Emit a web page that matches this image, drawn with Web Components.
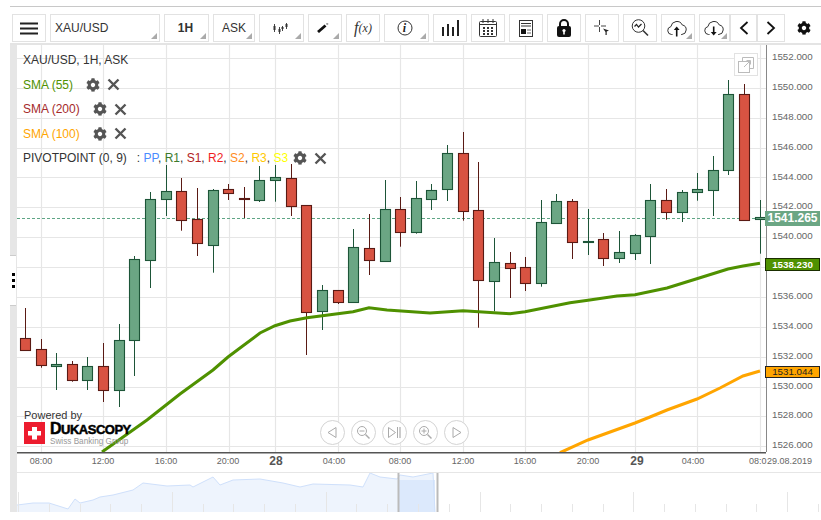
<!DOCTYPE html>
<html>
<head>
<meta charset="utf-8">
<title>XAU/USD</title>
<style>
  html, body { margin: 0; background: #fff; overflow: hidden; }
  body { font: 12px "Liberation Sans", Arial, sans-serif; color: #333; }
</style>
</head>
<body>
<trade-terminal>
  <tool-bar slot="toolbar">
    <tool-btn style="width:34px"><svg width="18" height="13" viewBox="0 0 18 13"><path d="M0 1.5h18M0 6.5h18M0 11.5h18" stroke="#222" stroke-width="2"/></svg></tool-btn>
    <tool-btn arrow style="width:110px;justify-content:flex-start;padding-left:4px">XAU/USD</tool-btn>
    <tool-btn arrow style="width:45px;font-weight:bold;padding-right:2px">1H</tool-btn>
    <tool-btn arrow style="width:42px">ASK</tool-btn>
    <tool-btn arrow style="width:45px"><svg width="15" height="11" viewBox="0 0 15 11" style="margin-right:3px"><path d="M1.5 1v8M6.500 4v7M9.500 3v5M13.500 0v6" stroke="#444"/><path d="M.5 3h2v4h-2zM5.500 6h2v3h-2zM8.500 4h2v2h-2zM12.500 1h2v3h-2z" fill="#333"/></svg></tool-btn>
    <tool-btn arrow style="width:34px"><svg width="12" height="10" viewBox="0 0 12 10" style="margin:-1px 4px 0 0"><path d="M1 9L8.5 2.5" stroke="#111" stroke-width="2.8"/><path d="M9.5 1.5L11 .3" stroke="#999" stroke-width="2"/></svg></tool-btn>
    <tool-btn style="width:34px;font:italic 14px 'Liberation Serif',serif;color:#333"><span style="font-size:16px">f</span><span style="font-size:12px">(x)</span></tool-btn>
    <tool-btn arrow style="width:45px"><svg width="16" height="16" viewBox="0 0 16 16" style="position:absolute;left:12px;top:5px"><circle cx="8" cy="8" r="7" fill="none" stroke="#333"/></svg><span style="font:italic bold 12px 'Liberation Serif',serif;color:#222;margin-left:-4px">i</span></tool-btn>
    <tool-btn style="width:34px"><svg width="17" height="16" viewBox="0 0 17 16"><path d="M1 7v9M6 4v12M11 7v9M16 0v16" stroke="#222" stroke-width="2"/></svg></tool-btn>
    <tool-btn style="width:34px"><svg width="18" height="18" viewBox="0 0 18 18"><rect x=".5" y="2.5" width="17" height="15" rx="1" fill="none" stroke="#333"/><path d="M4 0v4M9 0v4M14 0v4M.5 5.5h17" stroke="#333"/><path d="M4 8h2v2H4zM8 8h2v2H8zM12 8h2v2h-2zM4 11h2v2H4zM8 11h2v2H8zM12 11h2v2h-2zM4 14h2v2H4zM8 14h2v2H8zM12 14h2v2h-2z" fill="#333"/></svg></tool-btn>
    <tool-btn style="width:34px"><svg width="14" height="17" viewBox="0 0 14 17"><rect x=".5" y=".5" width="13" height="16" fill="none" stroke="#333"/><path d="M2 3.5h10M2 6h10" stroke="#333"/><rect x="2" y="9" width="5" height="5" fill="#111"/><path d="M8 10h4M8 13h4" stroke="#666"/></svg></tool-btn>
    <tool-btn style="width:34px"><svg width="14" height="18" viewBox="0 0 14 18"><path d="M3 8V5a4 4 0 0 1 8 0v3" fill="none" stroke="#111" stroke-width="2"/><rect y="7" width="14" height="11" rx="2" fill="#111"/><circle cx="7" cy="11.5" r="1.6" fill="#fff"/><rect x="6.2" y="12" width="1.6" height="3.5" fill="#fff"/></svg></tool-btn>
    <tool-btn style="width:34px"><svg width="16" height="16" viewBox="0 0 16 16"><path d="M5.5 0v5M5.5 7v5M0 6h5M7 6h5" stroke="#444"/><path d="M9 8.5l6 2-2.3 1v3.5h-1.2v-3z" fill="#222"/></svg></tool-btn>
    <tool-btn style="width:34px"><svg width="18" height="18" viewBox="0 0 18 18"><circle cx="7.5" cy="7" r="6.3" fill="none" stroke="#333"/><path d="M12 11.5l5 5" stroke="#333" stroke-width="1.6"/><path d="M3.5 7.5l2-2 2 2.5 3-3" fill="none" stroke="#222" stroke-width="1.2"/></svg></tool-btn>
    <tool-btn arrow style="width:34px"><svg width="20" height="17" viewBox="0 0 20 17" style="margin-right:3px"><path d="M5.5 14.5H4.5a4 4 0 0 1-.6-7.9A6 6 0 0 1 15.3 5a4.8 4.8 0 0 1-.5 9.5h-.8" fill="none" stroke="#333"/><path d="M9.7 16.5V9" stroke="#111" stroke-width="1.6"/><path d="M6.8 10l2.9-3.5 2.9 3.5z" fill="#111"/></svg></tool-btn>
    <tool-btn arrow style="width:31px;margin-right:-4px"><svg width="20" height="17" viewBox="0 0 20 17" style="margin-right:2px"><path d="M5.5 14.5H4.5a4 4 0 0 1-.6-7.9A6 6 0 0 1 15.3 5a4.8 4.8 0 0 1-.5 9.5h-.8" fill="none" stroke="#333"/><path d="M9.7 6.5V13" stroke="#111" stroke-width="1.6"/><path d="M6.8 12l2.9 3.5 2.9-3.5z" fill="#111"/></svg></tool-btn>
    <tool-btn style="width:27px;margin-right:-4px"><svg width="10" height="14" viewBox="0 0 10 14"><path d="M8.5 1L2 7l6.5 6" fill="none" stroke="#111" stroke-width="1.8"/></svg></tool-btn>
    <tool-btn style="width:28px"><svg width="10" height="14" viewBox="0 0 10 14"><path d="M1.5 1L8 7l-6.5 6" fill="none" stroke="#111" stroke-width="1.8"/></svg></tool-btn>
    <tool-btn plain style="width:16px;margin-left:7px"><svg width="16" height="16" viewBox="0 0 512 512"><path fill="#111" d="M487.4 315.7l-42.6-24.6c4.3-23.2 4.3-47 0-70.2l42.6-24.6c4.9-2.8 7.1-8.6 5.5-14-11.1-35.6-30-67.8-54.7-94.6-3.8-4.1-10-5.1-14.8-2.3L380.8 110c-17.9-15.4-38.5-27.3-60.8-35.1V25.8c0-5.6-3.9-10.5-9.4-11.7-36.7-8.2-74.3-7.8-109.2 0-5.5 1.2-9.4 6.1-9.4 11.7V75c-22.2 7.9-42.8 19.8-60.8 35.1L88.7 85.5c-4.9-2.8-11-1.9-14.8 2.3-24.7 26.7-43.6 58.9-54.7 94.6-1.7 5.4.6 11.2 5.5 14L67.3 221c-4.3 23.2-4.3 47 0 70.2l-42.6 24.6c-4.9 2.8-7.1 8.6-5.5 14 11.1 35.6 30 67.8 54.7 94.6 3.8 4.1 10 5.1 14.8 2.3l42.6-24.6c17.9 15.4 38.5 27.3 60.8 35.1v49.2c0 5.6 3.9 10.5 9.4 11.7 36.7 8.2 74.3 7.8 109.2 0 5.5-1.2 9.4-6.1 9.4-11.7v-49.2c22.2-7.9 42.8-19.8 60.8-35.1l42.6 24.6c4.9 2.8 11 1.9 14.8-2.3 24.7-26.7 43.6-58.9 54.7-94.6 1.5-5.5-.7-11.3-5.6-14.1zM256 336c-44.1 0-80-35.9-80-80s35.9-80 80-80 80 35.9 80 80-35.9 80-80 80z"/></svg></tool-btn>
  </tool-bar>

  <chart-plot slot="plot">
    <chart-legend>
      <div>XAU/USD, 1H, ASK</div>
      <legend-row style="color:#4f9100">SMA (55)</legend-row>
      <legend-row style="color:#a52a2a">SMA (200)</legend-row>
      <legend-row style="color:#ffa500">SMA (100)</legend-row>
      <legend-row>PIVOTPOINT (0, 9)<span style="margin-left:10px">:&nbsp;</span><span style="color:#4a8cff">PP</span>, <span style="color:#3c7a2c">R1</span>, <span style="color:#b22222">S1</span>, <span style="color:#f01e1e">R2</span>, <span style="color:#ff8c1e">S2</span>, <span style="color:#ffc800">R3</span>, <span style="color:#ffff00">S3</span></legend-row>
    </chart-legend>
    <pop-out></pop-out>
    <powered-by></powered-by>
    <nav-controls></nav-controls>
  </chart-plot>

  <price-axis slot="axis"></price-axis>
  <time-axis slot="time"></time-axis>
  <range-navigator slot="nav"></range-navigator>
</trade-terminal>

<script>
(function () {

    const terminalTemplate = document.createElement('template');
    terminalTemplate.innerHTML = `
    <style>
      :host { display: block; width: 821px; padding-top: 6px; }
      .rule { margin-left: 10px; border-top: 1px solid #c8c8c8; height: 7px; }
      .main { display: flex; margin-left: 10px; height: 467px; margin-top: 1px; border-top: 2px solid #e4e4e4; }
      .side { width: 7px; flex: none; height: 467px; background: #e6e6e6; display: flex; align-items: center; padding-top: 3px; box-sizing: border-box; }
      .grip { width: 6px; height: 51px; background: #fff; display: flex; flex-direction: column; align-items: center; justify-content: center; gap: 3px; border-top: 1px solid #ccc; border-bottom: 1px solid #ccc; box-sizing: border-box; }
      .grip i { width: 3px; height: 3px; background: #000; }
      .col { flex: 1; display: flex; flex-direction: column; min-width: 0; }
      .top { display: flex; height: 407px; }
    </style>
    <div class="rule"></div>
    <slot name="toolbar"></slot>
    <div class="main">
      <div class="side"><div class="grip"><i></i><i></i><i></i></div></div>
      <div class="col">
        <div class="top"><slot name="plot"></slot><slot name="axis"></slot></div>
        <slot name="time"></slot>
        <slot name="nav"></slot>
      </div>
    </div>
    `;

    class TradeTerminal extends HTMLElement {
        constructor() {
            super();
            this.attachShadow({mode: 'open'});
            this.shadowRoot.appendChild(terminalTemplate.content.cloneNode(true));
        }
    }

    const barTemplate = document.createElement('template');
    barTemplate.innerHTML = `
    <style>
      :host { display: flex; gap: 4px; height: 28px; padding-left: 12px; }
    </style>
    <slot></slot>
    `;

    class ToolBar extends HTMLElement {
        constructor() {
            super();
            this.attachShadow({mode: 'open'});
            this.shadowRoot.appendChild(barTemplate.content.cloneNode(true));
        }
    }

    const btnTemplate = document.createElement('template');
    btnTemplate.innerHTML = `
    <style>
      :host {
        display: flex; flex: none; align-items: center; justify-content: center;
        position: relative; box-sizing: border-box; height: 28px;
        border: 1px solid #e2e2e2; background: #fff; color: #333;
        font: 12px "Liberation Sans", Arial, sans-serif;
      }
      :host([plain]) { border-color: transparent; }
      .tri { display: none; position: absolute; right: 2px; bottom: 2px; width: 0; height: 0;
        border-style: solid; border-width: 0 0 6px 6px; border-color: transparent transparent #aaa transparent; }
      :host([arrow]) .tri { display: block; }
    </style>
    <slot></slot><span class="tri"></span>
    `;

    class ToolBtn extends HTMLElement {
        constructor() {
            super();
            this.attachShadow({mode: 'open'});
            this.shadowRoot.appendChild(btnTemplate.content.cloneNode(true));
        }
    }

    // candles: column, wick top, wick bottom, body top, body bottom, rising
    const CANDLES = [
        [25, 308, 351, 338.3, 350.7, 0], [41, 339, 367.7, 349.3, 365.3, 0], [56, 353, 390, 364.3, 366.7, 1],
        [72, 361, 381.7, 364.3, 380.7, 0], [87, 357, 390, 366.3, 380.7, 1], [103, 343, 402, 366.3, 390.7, 0],
        [119, 324, 407, 340.3, 390.7, 1], [134, 256, 376, 259.3, 340.7, 1], [150, 192, 288, 199.3, 260.7, 1],
        [166, 165, 216, 191.3, 199.7, 1], [181, 178, 230.7, 191.3, 220.7, 0], [197, 188, 256, 219.3, 243.3, 0],
        [213, 189, 272.7, 190.3, 245.7, 1], [228, 184, 200, 189.3, 193.3, 0], [244, 187, 218, 198.2, 199.8, 0],
        [259, 166, 202, 180.3, 200.3, 1], [275, 165, 201.7, 177.3, 180.3, 1], [291, 164, 216, 178.3, 206.3, 0],
        [306, 205, 355, 205.3, 312.3, 0], [322, 285, 330, 290.3, 311.3, 1], [338, 290, 304, 290.3, 302.3, 0],
        [353, 229, 302, 247.3, 302.3, 1], [369, 214, 275, 248.3, 260.3, 0], [385, 180, 261, 209.3, 261.3, 1],
        [400, 197, 246.7, 209.3, 232.3, 0], [416, 181, 233.7, 198.3, 232.3, 1], [431, 184, 210, 190.3, 199.3, 1],
        [447, 145, 201, 153.3, 189.3, 1], [463, 132, 220.7, 153.3, 211.3, 0], [478, 162, 327.7, 210.3, 280.3, 0],
        [494, 238, 311.3, 262.3, 281.3, 1], [510, 252, 298, 263.3, 268.3, 0], [525, 257, 291, 267.3, 283.3, 0],
        [541, 200, 286.7, 222.3, 283.3, 1], [556, 194, 223, 201.3, 223.3, 1], [572, 199, 259, 201.3, 242.3, 0],
        [588, 209, 255, 241.2, 242.8, 1], [603, 233, 266, 239.3, 258.3, 0], [619, 231, 263, 252.3, 258.3, 1],
        [635, 234, 260, 235.3, 253.3, 1], [650, 184, 264, 200.3, 236.3, 1], [666, 189, 219.7, 200.3, 212.3, 0],
        [682, 190, 222, 192.3, 212.3, 1], [697, 173, 200.7, 189.3, 192.7, 1], [713, 156, 216, 170.3, 190.3, 1],
        [728, 80, 175, 94.3, 170.3, 1], [744, 84, 220, 94.3, 220.3, 0], [760, 200, 253.7, 217.3, 219.7, 1]
    ];
    const SMA55 = '102,452 147,420 180,394 213,370 228,357 240,348 260,333 275,325.7 290,321 307,317.7 353,311.7 369,307.7 387,310 430,313 463,310.7 510,313.7 525,311.7 570,302.7 588,300.3 617,296 635,294.7 667,288 696,279 728,269 743,266 760,263.3';
    const SMA100 = '560,452.7 588,440 635,423 650,417 667,410 697,399 720,388 743,376 760,371';
    const V_LINES = [41, 103, 166, 229, 275, 338, 400, 463, 525, 588, 635, 697, 760];

    function buildPlotSvg() {
        let out = '';
        V_LINES.forEach(x => { out += `<path d="M${x + .5} 45V452" stroke="#e6e6e6" stroke-width="1.2"/>`; });
        for (let i = 0; i < 14; i++) {
            const y = Math.round(58 + 29.87 * i) + .5;
            out += `<path d="M17 ${y}H766" stroke="#e6e6e6" stroke-width="1.2"/>`;
        }
        out += `<path d="M17 218.5H766" stroke="#5fa585" stroke-dasharray="3 2"/>`;
        CANDLES.forEach(([c, wt, wb, bt, bb, up]) => {
            const line = up ? '#1d5538' : '#5a1a14';
            const fill = up ? '#6ba684' : '#d85342';
            const top = Math.floor(bt) + .5, bottom = Math.ceil(bb) - .5;
            out += `<path d="M${c + .5} ${wt}V${wb}" stroke="${line}"/>`;
            out += `<rect x="${c - 4.5}" y="${top}" width="10" height="${bottom - top}" fill="${fill}" stroke="${line}" stroke-width="1.1"/>`;
        });
        out += `<polyline points="${SMA55}" fill="none" stroke="#4f9100" stroke-width="3"/>`;
        out += `<polyline points="${SMA100}" fill="none" stroke="#ffa500" stroke-width="3"/>`;
        return out;
    }

    const plotTemplate = document.createElement('template');
    plotTemplate.innerHTML = `
    <style>
      :host { display: block; position: relative; width: 749px; height: 407px; overflow: hidden; }
      svg { display: block; }
    </style>
    <svg width="749" height="407" viewBox="17 45 749 407">${buildPlotSvg()}</svg>
    <slot></slot>
    `;

    class ChartPlot extends HTMLElement {
        constructor() {
            super();
            this.attachShadow({mode: 'open'});
            this.shadowRoot.appendChild(plotTemplate.content.cloneNode(true));
        }
    }

    const legendTemplate = document.createElement('template');
    legendTemplate.innerHTML = `
    <style>
      :host { position: absolute; left: 6px; top: 3px; display: flex; flex-direction: column;
        font: 12px/24.5px "Liberation Sans", Arial, sans-serif; color: #333; white-space: nowrap; }
    </style>
    <slot></slot>
    `;

    class ChartLegend extends HTMLElement {
        constructor() {
            super();
            this.attachShadow({mode: 'open'});
            this.shadowRoot.appendChild(legendTemplate.content.cloneNode(true));
        }
    }

    const GEAR = 'M487.4 315.7l-42.6-24.6c4.3-23.2 4.3-47 0-70.2l42.6-24.6c4.9-2.8 7.1-8.6 5.5-14-11.1-35.6-30-67.8-54.7-94.6-3.8-4.1-10-5.1-14.8-2.3L380.8 110c-17.9-15.4-38.5-27.3-60.8-35.1V25.8c0-5.6-3.9-10.5-9.4-11.7-36.7-8.2-74.3-7.8-109.2 0-5.5 1.2-9.4 6.1-9.4 11.7V75c-22.2 7.9-42.8 19.8-60.8 35.1L88.7 85.5c-4.9-2.8-11-1.9-14.8 2.3-24.7 26.7-43.6 58.9-54.7 94.6-1.7 5.4.6 11.2 5.5 14L67.3 221c-4.3 23.2-4.3 47 0 70.2l-42.6 24.6c-4.9 2.8-7.1 8.6-5.5 14 11.1 35.6 30 67.8 54.7 94.6 3.8 4.1 10 5.1 14.8 2.3l42.6-24.6c17.9 15.4 38.5 27.3 60.8 35.1v49.2c0 5.6 3.9 10.5 9.4 11.7 36.7 8.2 74.3 7.8 109.2 0 5.5-1.2 9.4-6.1 9.4-11.7v-49.2c22.2-7.9 42.8-19.8 60.8-35.1l42.6 24.6c4.9 2.8 11 1.9 14.8-2.3 24.7-26.7 43.6-58.9 54.7-94.6 1.5-5.5-.7-11.3-5.6-14.1zM256 336c-44.1 0-80-35.9-80-80s35.9-80 80-80 80 35.9 80 80-35.9 80-80 80z';

    const rowTemplate = document.createElement('template');
    rowTemplate.innerHTML = `
    <style>
      :host { display: flex; align-items: center; height: 24.5px; }
      .icons { display: flex; align-items: center; gap: 7px; margin-left: 13px; }
      :host(:last-child) .icons { margin-left: 5px; }
      svg { display: block; }
    </style>
    <span><slot></slot></span>
    <span class="icons">
      <svg width="14" height="14" viewBox="0 0 512 512"><path fill="#555" d="${GEAR}"/></svg>
      <svg width="13" height="13" viewBox="0 0 13 13"><path d="M1.5 1.5l10 10M11.5 1.5l-10 10" stroke="#555" stroke-width="2.4"/></svg>
    </span>
    `;

    class LegendRow extends HTMLElement {
        constructor() {
            super();
            this.attachShadow({mode: 'open'});
            this.shadowRoot.appendChild(rowTemplate.content.cloneNode(true));
        }
    }

    const popTemplate = document.createElement('template');
    popTemplate.innerHTML = `
    <style>
      :host { position: absolute; left: 717px; top: 8px; width: 24px; height: 23px; box-sizing: border-box;
        border: 1px solid #e2e2e2; background: #fff; display: flex; align-items: center; justify-content: center; }
    </style>
    <svg width="16" height="16" viewBox="0 0 16 16" fill="none" stroke="#bbb">
      <rect x=".5" y="4.5" width="11" height="11"/>
      <path d="M4.5 4.5v-4h11v11h-4"/>
      <path d="M6 10l6-6M8.5 3.5h4v4"/>
    </svg>
    `;

    class PopOut extends HTMLElement {
        constructor() {
            super();
            this.attachShadow({mode: 'open'});
            this.shadowRoot.appendChild(popTemplate.content.cloneNode(true));
        }
    }

    const poweredTemplate = document.createElement('template');
    poweredTemplate.innerHTML = `
    <style>
      :host { position: absolute; left: 7px; top: 364px; display: block; font: 11px "Liberation Sans", Arial, sans-serif; color: #333; }
      .by { line-height: 13px; }
      .logo { display: flex; gap: 5px; }
      .txt { display: flex; flex-direction: column; }
      .name { font: bold 13px/13px "Liberation Sans", Arial, sans-serif; color: #000; letter-spacing: -.5px; -webkit-text-stroke: .5px #000; white-space: nowrap; }
      .name b { font-size: 16px; }
      .sub { font: 8.2px/11px "Liberation Sans", Arial, sans-serif; color: #999; white-space: nowrap; }
    </style>
    <div class="by">Powered by</div>
    <div class="logo">
      <svg width="21" height="22" viewBox="0 0 21 22"><rect width="21" height="22" fill="#ed1c2e"/><path d="M8 5h5v4h4v4.500h-4v4h-5v-4H4V9h4z" fill="#fff"/></svg>
      <div class="txt"><span class="name"><b>D</b>UKASCOPY</span><span class="sub">Swiss Banking Group</span></div>
    </div>
    `;

    class PoweredBy extends HTMLElement {
        constructor() {
            super();
            this.attachShadow({mode: 'open'});
            this.shadowRoot.appendChild(poweredTemplate.content.cloneNode(true));
        }
    }

    const navTemplate = document.createElement('template');
    navTemplate.innerHTML = `
    <style>
      :host { position: absolute; left: 303px; top: 375px; display: flex; gap: 6px; }
      span { display: flex; align-items: center; justify-content: center; width: 25px; height: 25px; box-sizing: border-box;
        border: 1px solid #d4d4d4; border-radius: 50%; background: #fff; }
      svg { display: block; }
    </style>
    <span><svg width="13" height="13" viewBox="0 0 13 13" fill="none" stroke="#aaa"><path d="M10 1.500v10l-8-5z"/></svg></span>
    <span><svg width="15" height="15" viewBox="0 0 15 15" fill="none" stroke="#aaa"><circle cx="6" cy="6" r="4.500"/><path d="M9.500 9.500l4 4" stroke-width="1.500"/><path d="M3.500 6h5"/></svg></span>
    <span><svg width="15" height="13" viewBox="0 0 15 13" fill="none" stroke="#aaa"><path d="M1.500 1.500v10l7-5z"/><path d="M10.500 1v11" /><rect x="12" y="1" width="2" height="11" fill="#ccc" stroke="none"/></svg></span>
    <span><svg width="15" height="15" viewBox="0 0 15 15" fill="none" stroke="#aaa"><circle cx="6" cy="6" r="4.500"/><path d="M9.500 9.500l4 4" stroke-width="1.500"/><path d="M3.500 6h5M6 3.500v5"/></svg></span>
    <span><svg width="13" height="13" viewBox="0 0 13 13" fill="none" stroke="#aaa"><path d="M3 1.500v10l8-5z"/></svg></span>
    `;

    class NavControls extends HTMLElement {
        constructor() {
            super();
            this.attachShadow({mode: 'open'});
            this.shadowRoot.appendChild(navTemplate.content.cloneNode(true));
        }
    }

    const axisTemplate = document.createElement('template');
    const prices = [];
    // the 1538 label sits under the SMA flag, so its row stays empty
    for (let p = 1552; p >= 1526; p -= 2) prices.push(`<div>${p === 1538 ? '' : p + '.000'}</div>`);
    axisTemplate.innerHTML = `
    <style>
      :host { display: block; position: relative; width: 55px; height: 407px; border-left: 1px solid #888; box-sizing: border-box;
        font: 9.75px "Liberation Sans", Arial, sans-serif; color: #666; }
      .list { display: flex; flex-direction: column; padding-left: 5px; margin-top: -2.9px; }
      .list div { height: 29.87px; line-height: 29.87px; }
      .flag { position: absolute; left: -2px; width: 55px; box-sizing: border-box; text-align: center; white-space: nowrap; }
      .now { top: 166px; height: 15px; background: #6ba684; color: #fff; font: bold 12px/15px "Liberation Sans", Arial, sans-serif; }
      .s55 { top: 213px; height: 13px; background: #4f9100; color: #fff; font: bold 9.75px/11px "Liberation Sans", Arial, sans-serif; border: 1px solid #1a2e00; }
      .s100 { top: 321px; height: 12px; background: #ffa500; color: #222; font: 9.75px/10px "Liberation Sans", Arial, sans-serif; border: 1px solid #222; }
    </style>
    <div class="list">${prices.join('')}</div>
    <div class="flag now">1541.265</div>
    <div class="flag s55">1538.230</div>
    <div class="flag s100">1531.044</div>
    `;

    class PriceAxis extends HTMLElement {
        constructor() {
            super();
            this.attachShadow({mode: 'open'});
            this.shadowRoot.appendChild(axisTemplate.content.cloneNode(true));
        }
    }

    const timeTemplate = document.createElement('template');
    const TIMES = [[41, '08:00'], [103, '12:00'], [166, '16:00'], [228, '20:00'], [334, '04:00'], [400, '08:00'], [463, '12:00'], [525, '16:00'], [588, '20:00'], [693, '04:00']];
    timeTemplate.innerHTML = `
    <style>
      :host { display: block; height: 21px; border-bottom: 1px solid #e6e6e6; box-sizing: border-box; }
      svg { display: block; }
      text { font: 9px "Liberation Sans", Arial, sans-serif; fill: #666; text-anchor: middle; }
      .start { text-anchor: start; }
      .day { font: bold 12px "Liberation Sans", Arial, sans-serif; fill: #555; }
    </style>
    <svg width="804" height="20" viewBox="17 452 804 20">
      <path d="M17 452.700H766" stroke="#555" stroke-width="1.400"/>
      ${TIMES.map(([x, t]) => `<text x="${x}" y="464">${t}</text>`).join('')}
      <text class="day" x="276" y="465">28</text>
      <text class="day" x="637" y="465">29</text>
      <text class="start" x="749" y="464">08:0</text>
      <text class="start" x="767" y="464">29.08.2019</text>
    </svg>
    `;

    class TimeAxis extends HTMLElement {
        constructor() {
            super();
            this.attachShadow({mode: 'open'});
            this.shadowRoot.appendChild(timeTemplate.content.cloneNode(true));
        }
    }

    const rangeTemplate = document.createElement('template');
    const ticks = [];
    for (let i = 0; i < 27; i++) {
        const x = Math.round(18 + 30.77 * i) + .5;
        const tall = i % 5 === 0;
        ticks.push(`<path d="M${x} ${tall ? 492 : 504}V512" stroke="#e6e6e6"/>`);
    }
    const NAV_LINE = '17,505 33,503 49,503 68,509 75,499 80,503 93,500 100,497 113,495 133,490 143,483 167,486 190,485 193,487 203,482 213,477 220,485 233,480 260,479 283,483 300,487 313,484 350,485 363,487 370,473 380,477 397,479 400,475 413,477 433,473 435,512';
    rangeTemplate.innerHTML = `
    <style>
      :host { display: block; height: 39px; }
      svg { display: block; }
    </style>
    <svg width="804" height="39" viewBox="17 473 804 39">
      <polygon points="17,512 ${NAV_LINE}" fill="#eef4fd"/>
      <path d="M398 480H435V512H398z" fill="#dce9fc"/>
      <polyline points="${NAV_LINE}" fill="none" stroke="#cfe0fb"/>
      ${ticks.join('')}
      <path d="M398.500 473V512M437.500 473V512" stroke="#bbb" stroke-width="2"/>
    </svg>
    `;

    class RangeNavigator extends HTMLElement {
        constructor() {
            super();
            this.attachShadow({mode: 'open'});
            this.shadowRoot.appendChild(rangeTemplate.content.cloneNode(true));
        }
    }

    window.customElements.define('trade-terminal', TradeTerminal);
    window.customElements.define('tool-bar', ToolBar);
    window.customElements.define('tool-btn', ToolBtn);
    window.customElements.define('chart-plot', ChartPlot);
    window.customElements.define('chart-legend', ChartLegend);
    window.customElements.define('legend-row', LegendRow);
    window.customElements.define('pop-out', PopOut);
    window.customElements.define('powered-by', PoweredBy);
    window.customElements.define('nav-controls', NavControls);
    window.customElements.define('price-axis', PriceAxis);
    window.customElements.define('time-axis', TimeAxis);
    window.customElements.define('range-navigator', RangeNavigator);
})();
</script>
</body>
</html>
